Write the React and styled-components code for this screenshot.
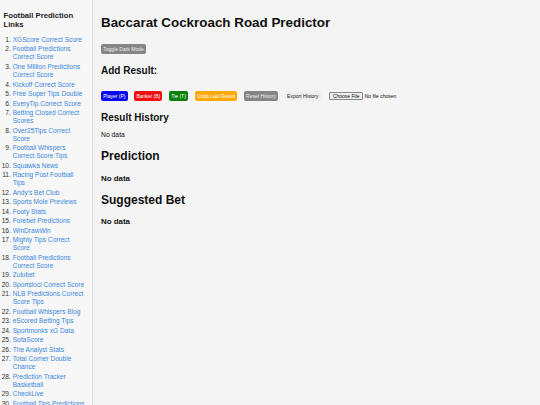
import React from 'react'
import styled, { createGlobalStyle } from 'styled-components';

const GlobalStyle = createGlobalStyle`
  html, body {
    margin:0;
    padding:0;
    background-color:#f4f4f4;
    font-family:"Liberation Sans", Arial, sans-serif;
    color:#1a1a1a;
  }
  `

const Page = styled.div`
  display:flex;
  height:100vh;
  overflow:hidden;
  `

const Sidebar = styled.aside`
  box-sizing:border-box;
  flex:0 0 93px;
  width:93px;
  height:100%;
  padding:10.9px 5.5px 0 3.5px;
  background-color:#f7f7f7;
  border-right:1px solid #dcdcdc;
  overflow:hidden;
  `

const SideTitle = styled.h3`
  margin:0;
  font-size:7.7px;
  line-height:9px;
  font-weight:bold;
  color:#222;
  `

const LinkList = styled.ol`
  margin:7px 0 0;
  padding-left:9.2px;
  font-size:6.6px;
  line-height:8.1px;
  `

const LinkItem = styled.li`
  margin-bottom:1.4px;
  &::marker {
    color:#333;
  }
  `

const SideLink = styled.a`
  color:#3a87dd;
  text-decoration:none;
  `

const Main = styled.main`
  flex:1;
  padding:0 8px;
  display:flex;
  flex-direction:column;
  align-items:flex-start;
  `

const Title = styled.h1`
  margin:14.9px 0 0;
  font-size:13.4px;
  line-height:1.2;
  font-weight:bold;
  color:#111;
  `

const SectionTitle = styled.h2`
  margin:${p => p.$top}px 0 0;
  font-size:${p => p.$size}px;
  line-height:1.2;
  font-weight:bold;
  color:#111;
  `

const NoData = styled.p`
  margin:${p => p.$top}px 0 0;
  font-size:${p => (p.$bold ? 7.9 : 6.8)}px;
  font-weight:${p => (p.$bold ? 'bold' : 'normal')};
  line-height:1.2;
  color:#111;
  `

const ActionButton = styled.button`
  height:10px;
  padding:0 2.2px;
  border:none;
  border-radius:2px;
  font-family:"Liberation Sans", Arial, sans-serif;
  font-size:5px;
  line-height:10px;
  white-space:nowrap;
  background-color:${p => p.$bg};
  color:${p => p.$fg || '#fff'};
  cursor:pointer;
  `

const ToggleButton = styled(ActionButton)`
  margin-top:13px;
  `

const ButtonRow = styled.div`
  margin-top:14.3px;
  display:flex;
  align-items:center;
  gap:6.6px;
  `

const FileInput = styled.input`
  margin-left:2px;
  font-family:"Liberation Sans", Arial, sans-serif;
  font-size:5px;
  color:#111;
  &::file-selector-button {
    font-family:"Liberation Sans", Arial, sans-serif;
    font-size:5px;
    height:7.5px;
    padding:0 2.6px;
    margin-right:1.5px;
    border:0.7px solid #8a8a8a;
    border-radius:1px;
    background-color:#efefef;
    color:#111;
  }
  `

const links = [
  'XGScore Correct Score',
  'Football Predictions Correct Score',
  'One Million Predictions Correct Score',
  'Kickoff Correct Score',
  'Free Super Tips Double',
  'EveryTip Correct Score',
  'Betting Closed Correct Scores',
  'Over25Tips Correct Score',
  'Football Whispers Correct Score Tips',
  'Squawka News',
  'Racing Post Football Tips',
  "Andy's Bet Club",
  'Sports Mole Previews',
  'Footy Stats',
  'Forebet Predictions',
  'WinDrawWin',
  'Mighty Tips Correct Score',
  'Football Predictions Correct Score',
  'Zulubet',
  'Sportsloci Correct Score',
  'NLB Predictions Correct Score Tips',
  'Football Whispers Blog',
  'eScored Betting Tips',
  'Sportmonks xG Data',
  'SofaScore',
  'The Analyst Stats',
  'Total Corner Double Chance',
  'Prediction Tracker Basketball',
  'CheckLive',
  'Football Tips Predictions',
  'Bet Tips Daily',
  'Soccer Vista',
]

const actions = [
  { label: 'Player (P)', bg: '#0a0af0' },
  { label: 'Banker (B)', bg: '#f01010' },
  { label: 'Tie (T)', bg: '#0a800a' },
  { label: 'Undo Last Result', bg: '#ffa80a' },
  { label: 'Reset History', bg: '#858585', fg: '#eee' },
  { label: 'Export History', bg: '#efefef', fg: '#222' },
]

const App = () => {
  return (
    <Page>
      <GlobalStyle />
      <Sidebar>
        <SideTitle>Football Prediction Links</SideTitle>
        <LinkList>
          {links.map((l, i) => (
            <LinkItem key={i}>
              <SideLink href="#">{l}</SideLink>
            </LinkItem>
          ))}
        </LinkList>
      </Sidebar>
      <Main>
        <Title>Baccarat Cockroach Road Predictor</Title>
        <ToggleButton $bg="#858585" $fg="#eee">Toggle Dark Mode</ToggleButton>
        <SectionTitle $size={10} $top={10.7}>Add Result:</SectionTitle>
        <ButtonRow>
          {actions.map(a => (
            <ActionButton key={a.label} $bg={a.bg} $fg={a.fg}>{a.label}</ActionButton>
          ))}
          <FileInput type="file" />
        </ButtonRow>
        <SectionTitle $size={10} $top={10.7}>Result History</SectionTitle>
        <NoData $top={7.7}>No data</NoData>
        <SectionTitle $size={12} $top={9.6}>Prediction</SectionTitle>
        <NoData $bold $top={10.6}>No data</NoData>
        <SectionTitle $size={12} $top={9.5}>Suggested Bet</SectionTitle>
        <NoData $bold $top={9.6}>No data</NoData>
      </Main>
    </Page>
  )
}
export default App;
